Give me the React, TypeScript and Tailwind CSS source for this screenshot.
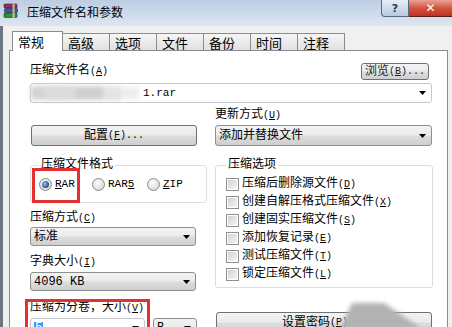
import React from "react";

const btnBg =
  "bg-[linear-gradient(#f3f3f3_0%,#ebebeb_48%,#dddddd_52%,#cfcfcf_100%)]";

const Arrow = () => (
  <svg width="7" height="4" viewBox="0 0 7 4" className="shrink-0">
    <path d="M0 0h7L3.5 4z" fill="#000" />
  </svg>
);

function Combo({
  children,
  className = "",
  editable = false,
}: {
  children?: React.ReactNode;
  className?: string;
  editable?: boolean;
}) {
  return (
    <div
      className={`flex items-center justify-between rounded-[3px] border pl-[3px] pr-[5px] ${
        editable ? "bg-white border-[#c5c7cc]" : `${btnBg} border-[#8e8f8f]`
      } ${className}`}
    >
      <div className="flex min-w-0 items-center whitespace-nowrap">{children}</div>
      <Arrow />
    </div>
  );
}

function Button({
  children,
  className = "",
}: {
  children: React.ReactNode;
  className?: string;
}) {
  return (
    <div
      className={`flex items-center justify-center whitespace-nowrap rounded-[3px] border border-[#707070] ${btnBg} ${className}`}
    >
      {children}
    </div>
  );
}

const Key = ({ k }: { k: string }) => (
  <span className="text-[10px]">
    (<span className="underline underline-offset-1">{k}</span>)
  </span>
);

function Radio({ checked = false }: { checked?: boolean }) {
  return (
    <div className="flex h-[13px] w-[13px] shrink-0 items-center justify-center rounded-full border border-[#8a8a8a] bg-[radial-gradient(circle_at_40%_35%,#fdfdfd_0%,#dcdcdc_70%,#c9c9c9_100%)]">
      {checked && (
        <div className="h-[7px] w-[7px] rounded-full bg-[radial-gradient(circle_at_40%_40%,#9fc3ea_0%,#2c5f9e_60%,#173d6e_100%)]" />
      )}
    </div>
  );
}

const Check = () => (
  <div className="h-[13px] w-[13px] shrink-0 border border-[#8e8f8f] bg-white p-[1px]">
    <div className="h-full w-full bg-linear-to-br from-[#d2d2d2] to-[#f6f6f6]" />
  </div>
);

function GroupBox({
  title,
  left,
  className = "",
  children,
}: {
  title: string;
  left: string;
  className?: string;
  children: React.ReactNode;
}) {
  return (
    <div className={`relative rounded-[3px] border border-[#d5dfe5] ${className}`}>
      <span className={`absolute -top-[8px] ${left} bg-white px-[2px] leading-[14px]`}>
        {title}
      </span>
      {children}
    </div>
  );
}

const WinRarIcon = () => (
  <svg width="16" height="16" viewBox="0 0 16 16" className="ml-[3px] mt-[3px]">
    <rect x="1" y="1" width="13" height="4" rx="1" fill="#9c2a5c" stroke="#3a1024" strokeWidth="0.6" />
    <rect x="1.5" y="5.5" width="13" height="4" rx="1" fill="#3558a8" stroke="#14224a" strokeWidth="0.6" />
    <rect x="1" y="10" width="13" height="4.5" rx="1" fill="#2f8f3c" stroke="#103a16" strokeWidth="0.6" />
    <rect x="9.5" y="0.5" width="2.2" height="14.5" fill="#d9c58a" opacity="0.85" />
  </svg>
);

const tabs = ["高级", "选项", "文件", "备份", "时间", "注释"];

const options: [string, string][] = [
  ["压缩后删除源文件", "D"],
  ["创建自解压格式压缩文件", "X"],
  ["创建固实压缩文件", "S"],
  ["添加恢复记录", "E"],
  ["测试压缩文件", "T"],
  ["锁定压缩文件", "L"],
];

export default function App() {
  return (
    <div className="relative h-[327px] w-[452px] overflow-hidden bg-[#cddbea] font-['Liberation_Mono','Noto_Sans_CJK_SC',monospace] text-[12px] leading-none text-black">
      {/* title bar */}
      <div className="flex h-[26px] items-start bg-linear-to-b from-[#bccde2] to-[#dde7f2]">
        <WinRarIcon />
        <span className="ml-[8px] mt-[5px] font-['Noto_Sans_CJK_SC',sans-serif] text-[12px] leading-[14px]">
          压缩文件名和参数
        </span>
        <div className="ml-auto flex">
          <div className="flex h-[17px] w-[28px] items-center justify-center rounded-bl-[4px] border border-t-0 border-[#5a6b80] bg-linear-to-b from-[#e6eef7] to-[#b9c9dc] font-['DejaVu_Sans',sans-serif] text-[11px] font-bold text-[#2d3a4a]">
            ?
          </div>
          <div className="flex h-[17px] w-[43px] items-center justify-center border-b border-[#5a2020] bg-linear-to-b from-[#e8a293] via-[#d2553f] to-[#c2301e] font-['DejaVu_Sans',sans-serif] text-[12px] font-bold text-white">
            ✕
          </div>
        </div>
      </div>

      <div className="flex h-[301px]">
        <div className="w-[3px] bg-[#6d7784]" />
        <div className="flex flex-1 flex-col bg-[#f0f0f0] pl-[6px] pr-[4px] pt-[5px]">
          {/* tabs */}
          <div className="relative z-10 flex items-end pl-[3px] font-['Noto_Sans_CJK_SC',sans-serif] text-[13px]">
            <div className="-mb-px flex h-[20px] w-[51px] items-center border border-b-0 border-[#898c95] bg-white pl-[5px]">
              常规
            </div>
            {tabs.map((t) => (
              <div
                key={t}
                className="flex h-[17px] w-[47px] items-center border-r border-t border-[#898c95] bg-linear-to-b from-[#f6f6f6] to-[#e0e0e0] pl-[5px]"
              >
                {t}
              </div>
            ))}
          </div>

          {/* panel */}
          <div className="flex-1 border border-[#898c95] bg-white pl-[20px] pt-[12px]">
            <div className="flex h-[17px] w-[399px] items-end justify-between">
              <span className="mb-[1px] leading-[14px]">
                压缩文件名<Key k="A" />
              </span>
              <Button className="h-[17px] w-[68px] text-[#222]">
                浏览<Key k="B" />
                <span className="text-[10px]">...</span>
              </Button>
            </div>
            <Combo editable className="mt-[3px] h-[20px] w-[402px] !pl-0">
              <div className="flex h-[18px] items-center blur-[2px]">
                <div className="h-[14px] w-[14px] bg-[#d4d4d4]" />
                <div className="h-[16px] w-[30px] bg-[#dcdcdc]" />
                <div className="h-[14px] w-[28px] bg-[#d0d0d0]" />
                <div className="h-[15px] w-[18px] bg-[#e4e4e4]" />
                <div className="h-[12px] w-[18px] bg-[#ededed]" />
              </div>
              <span className="ml-[4px] text-[11px]">1.rar</span>
            </Combo>

            <div className="mt-[5px] flex gap-[18px]">
              <div className="w-[167px] pl-[1px] pt-[17px]">
                <Button className="h-[21px] w-[166px]">
                  配置<Key k="F" />
                  <span className="text-[10px]">...</span>
                </Button>
              </div>
              <div className="w-[217px]">
                <div className="h-[14px] leading-[14px]">
                  更新方式<Key k="U" />
                </div>
                <Combo className="mt-[3px] h-[21px] w-[217px]">添加并替换文件</Combo>
              </div>
            </div>

            <div className="flex gap-[8px]">
              {/* left column */}
              <div className="relative w-[177px]">
                <GroupBox title="压缩文件格式" left="left-[8px]" className="mt-[19px] h-[38px] w-[177px]">
                  <div className="flex items-center pl-[8px] pt-[12px] text-[11px]">
                    <div className="flex w-[53px] items-center gap-[3px]">
                      <Radio checked />
                      <span>
                        <span className="underline">R</span>AR
                      </span>
                    </div>
                    <div className="flex w-[55px] items-center gap-[3px]">
                      <Radio />
                      <span>
                        RAR<span className="underline">5</span>
                      </span>
                    </div>
                    <div className="flex items-center gap-[3px]">
                      <Radio />
                      <span>
                        <span className="underline">Z</span>IP
                      </span>
                    </div>
                  </div>
                  <div className="absolute left-[1px] top-[2px] h-[35px] w-[48px] border-[3px] border-[#e3312f]" />
                </GroupBox>

                <div className="mt-[9px] leading-[12px]">
                  压缩方式<Key k="C" />
                </div>
                <Combo className="mt-[2px] h-[19px] w-[166px]">标准</Combo>

                <div className="mt-[10px] leading-[12px]">
                  字典大小<Key k="I" />
                </div>
                <Combo className="mt-[3px] h-[19px] w-[166px]">4096 KB</Combo>

                <div className="relative mt-[11px]">
                  <div className="leading-[12px]">
                    压缩为分卷，大小<Key k="V" />
                  </div>
                  <div className="mt-[3px] flex gap-[8px]">
                    <Combo editable className="h-[20px] w-[115px]">
                      <span className="bg-[#3399ff] px-[1px] text-white">5</span>
                    </Combo>
                    <Combo className="h-[20px] w-[44px]">B</Combo>
                  </div>
                  <div className="absolute -left-[5px] -top-[3px] h-[40px] w-[125px] border-[3px] border-[#e3312f]" />
                </div>
              </div>

              {/* right column */}
              <div className="w-[218px]">
                <GroupBox title="压缩选项" left="left-[10px]" className="mt-[19px] w-[218px] pb-[4px] pl-[10px] pt-[9px]">
                  {options.map(([label, k]) => (
                    <div key={k} className="flex h-[18px] items-center gap-[3px]">
                      <Check />
                      <span>
                        {label}
                        <Key k={k} />
                      </span>
                    </div>
                  ))}
                </GroupBox>
                <Button className="ml-[1px] mt-[24px] h-[21px] w-[216px]">
                  设置密码<Key k="P" />
                  <span className="text-[10px]">...</span>
                </Button>
              </div>
            </div>
          </div>
        </div>
      </div>

      {/* blurred pointer shadow */}
      <svg
        width="100"
        height="32"
        viewBox="0 0 100 32"
        className="absolute left-[334px] top-[299px]"
      >
        <defs>
          <filter id="bl" x="-20%" y="-40%" width="140%" height="180%">
            <feGaussianBlur stdDeviation="2.2" />
          </filter>
        </defs>
        <polygon points="18,4 50,4 88,30 6,30" fill="#b2b2b2" filter="url(#bl)" />
      </svg>
    </div>
  );
}
